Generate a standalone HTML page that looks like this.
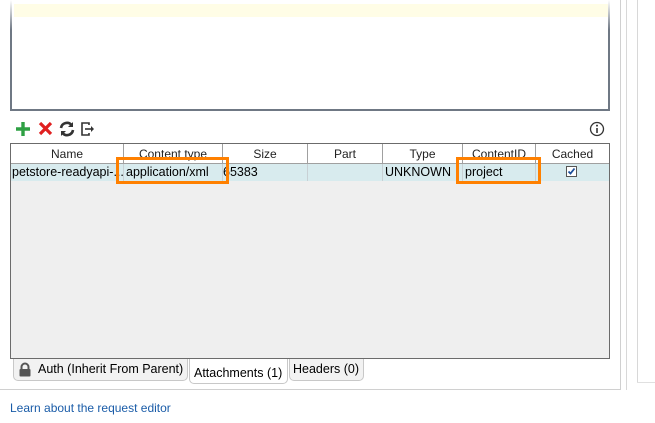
<!DOCTYPE html>
<html><head><style>
body{margin:0;width:655px;height:423px;background:#fff;position:relative;overflow:hidden;font-family:"Liberation Sans","DejaVu Sans",sans-serif;font-size:12px;color:#000}
.a{position:absolute}
.th{position:absolute;top:0;height:19px;line-height:21px;text-align:center;border-right:1px solid #a0a0a0;box-sizing:border-box;font-size:12px;color:#222}
.td{position:absolute;top:0;height:17px;line-height:17px;border-right:1px solid #c8d0d4;box-sizing:border-box;padding-left:2px;font-size:12.5px;white-space:nowrap;overflow:hidden}
.tab{position:absolute;border:1px solid #c8c8c8;border-top:none;border-radius:0 0 5px 5px;background:#f2f2f2;font-size:12.5px;line-height:20px;box-sizing:border-box;white-space:nowrap}
</style></head><body>
<div class="a" style="left:10px;top:0;width:600px;height:111px;border-left:2px solid #6f7884;border-right:2px solid #6f7884;border-bottom:2px solid #6f7884;box-sizing:border-box;background:#fff"></div>
<div class="a" style="left:10px;top:0;width:2px;height:30px;background:linear-gradient(#fff,#6f7884)"></div>
<div class="a" style="left:608px;top:0;width:2px;height:30px;background:linear-gradient(#fff,#6f7884)"></div>
<div class="a" style="left:14px;top:4px;width:594px;height:13px;background:#fffde6"></div>
<div class="a" style="left:620px;top:0;width:1px;height:390px;background:#d0d0d0"></div>
<div class="a" style="left:626px;top:0;width:1px;height:390px;background:#d8d8d8"></div>
<div class="a" style="left:637px;top:0;width:1px;height:383px;background:#d8d8d8"></div>
<div class="a" style="left:637px;top:382px;width:18px;height:1px;background:#e0e0e0"></div>
<div class="a" style="left:0;top:389px;width:621px;height:1px;background:#d0d0d0"></div>
<svg class="a" style="left:16px;top:121px" width="86" height="16" viewBox="0 0 86 16">
<path d="M7 1v14M0 8h14" stroke="#2ea043" stroke-width="3.4"/>
<path d="M24 2l11 11M35 2L24 13" stroke="#e02020" stroke-width="3.2"/>
<path d="M45 7a6 6 0 0 1 10.5-3" stroke="#333" stroke-width="2.6" fill="none"/><path d="M57 1v5h-5z" fill="#333"/>
<path d="M57 9a6 6 0 0 1-10.5 3" stroke="#333" stroke-width="2.6" fill="none"/><path d="M45 15v-5h5z" fill="#333"/>
<path d="M73 4V2h-7v12h7v-2" stroke="#333" stroke-width="1.6" fill="none"/><path d="M69 8h7" stroke="#333" stroke-width="1.6"/><path d="M75 5l3 3-3 3z" fill="#333"/>
</svg>
<svg class="a" style="left:589px;top:121px" width="16" height="16"><circle cx="8" cy="8" r="6.5" stroke="#333" stroke-width="1.3" fill="none"/><path d="M8 7v5" stroke="#333" stroke-width="1.6"/><circle cx="8" cy="4.6" r="1" fill="#333"/></svg>
<div class="a" style="left:10px;top:143px;width:600px;height:216px;border:1px solid #6b6b6b;box-sizing:border-box;background:#efefef">
 <div class="a" style="left:0;top:0;width:598px;height:19px;background:#fff;border-bottom:1px solid #a0a0a0">
  <div class="th" style="left:0;width:113px">Name</div>
  <div class="th" style="left:113px;width:99px">Content type</div>
  <div class="th" style="left:212px;width:85px">Size</div>
  <div class="th" style="left:297px;width:75px">Part</div>
  <div class="th" style="left:372px;width:80px">Type</div>
  <div class="th" style="left:452px;width:73px">ContentID</div>
  <div class="th" style="left:525px;width:73px;border-right:none">Cached</div>
 </div>
 <div class="a" style="left:0;top:20px;width:598px;height:17px;background:#d8ebee">
  <div class="td" style="left:0;width:113px;padding-left:1px">petstore-readyapi-...</div>
  <div class="td" style="left:113px;width:99px">application/xml</div>
  <div class="td" style="left:212px;width:85px;padding-left:0">65383</div>
  <div class="td" style="left:297px;width:75px"></div>
  <div class="td" style="left:372px;width:80px">UNKNOWN</div>
  <div class="td" style="left:452px;width:73px">project</div>
  <div class="td" style="left:525px;width:73px;border-right:none"><div class="a" style="left:30px;top:2px;width:11px;height:11px;border:1px solid #555;background:#fff;box-sizing:border-box"></div><svg class="a" style="left:31px;top:3px" width="9" height="9"><path d="M1.5 4.5l2 2 4-5" stroke="#1d4f9a" stroke-width="1.8" fill="none"/></svg></div>
 </div>
</div>
<div class="a" style="left:116px;top:157px;width:113px;height:27px;border:3px solid #ff8000;box-sizing:border-box"></div>
<div class="a" style="left:456px;top:157px;width:85px;height:27px;border:3px solid #ff8000;box-sizing:border-box"></div>
<div class="tab" style="left:13px;top:359px;width:175px;height:22px;padding-left:24px">Auth (Inherit From Parent)</div>
<svg class="a" style="left:18px;top:362px" width="14" height="15"><path d="M3.5 7V5a3.5 3.5 0 0 1 7 0v2" stroke="#555" stroke-width="2" fill="none"/><rect x="1.5" y="7" width="11" height="7.5" rx="1" fill="#555"/></svg>
<div class="tab" style="left:189px;top:359px;width:99px;height:25px;background:#fff;padding-left:4px;line-height:28px">Attachments (1)</div>
<div class="tab" style="left:289px;top:359px;width:75px;height:22px;padding-left:3px">Headers (0)</div>
<div class="a" style="left:10px;top:401px;font-size:12px;color:#1a5ca8">Learn about the request editor</div>
</body></html>
